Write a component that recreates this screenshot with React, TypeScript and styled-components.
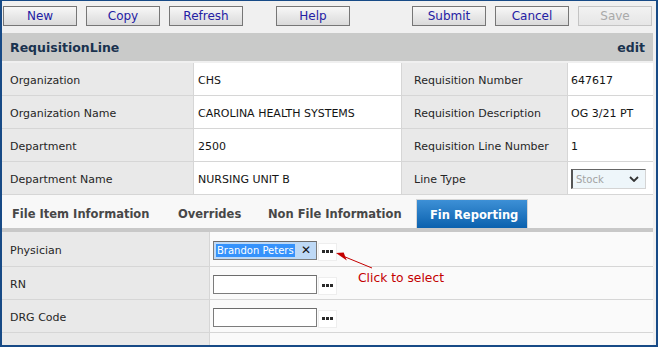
import styled, { createGlobalStyle } from 'styled-components'

const GlobalStyle = createGlobalStyle`
  html, body {
    margin: 0;
    padding: 0;
    background: #f0f0f0;
  }
  body {
    font-family: 'DejaVu Sans', Verdana, sans-serif;
    font-size: 11px;
    color: #222;
  }
`

const Frame = styled.div`
  box-sizing: border-box;
  width: 658px;
  height: 347px;
  border: 2px solid #174a86;
  border-top-width: 1px;
  background: #f0f0f0;
  overflow: hidden;
`

const Toolbar = styled.div`
  display: flex;
  gap: 9px;
  height: 32px;
  box-sizing: border-box;
  padding: 5px 4px 0 1px;
`

const ToolButton = styled.button<{ $push?: number; $disabled?: boolean }>`
  width: 74px;
  height: 20px;
  margin: 0;
  margin-left: ${({ $push }) => ($push ? `${$push}px` : '0')};
  padding: 1px 0 0;
  box-sizing: border-box;
  border: 1px solid ${({ $disabled }) => ($disabled ? '#c4c4c4' : '#767676')};
  background: ${({ $disabled }) =>
    $disabled ? 'linear-gradient(#f2f2f2, #e6e6e6)' : 'linear-gradient(#f7f7f7, #dadada)'};
  color: ${({ $disabled }) => ($disabled ? '#a9a9a9' : '#2420a4')};
  font-family: 'DejaVu Sans', Verdana, sans-serif;
  font-size: 12px;
  line-height: 17px;
  cursor: default;
`

const Spacer = styled.div`
  flex: 1;
`

const Main = styled.div`
  margin-right: 3px;
`

const TitleBar = styled.div`
  display: flex;
  justify-content: space-between;
  align-items: center;
  height: 28px;
  box-sizing: border-box;
  padding: 1px 8px 0;
  background: #c9cac9;
  color: #19324f;
  font-weight: bold;
  font-size: 12.5px;
`

const InfoGrid = styled.div`
  display: grid;
  grid-template-columns: 192px 208px 166px 1fr;
  margin-top: 2px;
`

const Cell = styled.div<{ $label?: boolean; $pad: number; $h?: number; $last?: boolean; $tint?: string }>`
  display: flex;
  align-items: center;
  position: relative;
  height: ${({ $h }) => $h ?? 33}px;
  box-sizing: border-box;
  padding: 2px 0 0 ${({ $pad }) => $pad}px;
  background: ${({ $label, $tint }) => ($label ? '#e9e9e9' : $tint ?? '#ffffff')};
  border-bottom: 1px solid #d6d6d6;
  border-right: ${({ $last }) => ($last ? 'none' : '1px solid #d6d6d6')};
  color: ${({ $label }) => ($label ? '#262626' : '#141414')};
  white-space: nowrap;
`

const SelectBox = styled.div`
  display: flex;
  align-items: center;
  justify-content: space-between;
  width: 75px;
  height: 20px;
  box-sizing: border-box;
  padding: 0 6px 0 3px;
  border-top: 1px solid #666;
  border-left: 2px solid #555;
  border-right: 1px solid #d4d4d4;
  border-bottom: 1px solid #d4d4d4;
  background: #eef6fa;
  color: #a3a3a3;
  font-size: 10px;
`

const TabBar = styled.div`
  display: flex;
  height: 37px;
  box-sizing: border-box;
  padding-top: 4px;
  background: #f8f8f8;
  border-bottom: 4px solid #c8c8c8;
`

const Tab = styled.div<{ $w: number; $pad: number; $active?: boolean }>`
  display: flex;
  align-items: center;
  width: ${({ $w }) => $w}px;
  box-sizing: border-box;
  padding: 1px 0 0 ${({ $pad }) => $pad}px;
  font-weight: bold;
  font-size: 11.5px;
  white-space: nowrap;
  color: ${({ $active }) => ($active ? '#ffffff' : '#474747')};
  background: ${({ $active }) => ($active ? 'linear-gradient(#3d90d6, #0b61ae)' : 'transparent')};
  border: ${({ $active }) => ($active ? '1px solid #d6d6d6' : 'none')};
  border-bottom: none;
`

const FormGrid = styled.div`
  display: grid;
  grid-template-columns: 208px 1fr;
`

const LookupBox = styled.div<{ $filled?: boolean }>`
  display: flex;
  align-items: center;
  justify-content: space-between;
  width: 104px;
  height: 19px;
  box-sizing: border-box;
  padding: 0 5px 0 2px;
  border: 1px solid #7c7c7c;
  border-top-color: #6c6c6c;
  background: ${({ $filled }) => ($filled ? '#bed9f6' : '#ffffff')};
  font-size: 10px;
`

const Selected = styled.span`
  background: #3592fb;
  color: #ffffff;
  line-height: 13px;
  padding: 0 1px;
`

const Clear = styled.span`
  color: #111;
  font-size: 12px;
  line-height: 1;
`

const DotsButton = styled.div`
  display: flex;
  align-items: center;
  justify-content: center;
  gap: 1px;
  width: 19px;
  height: 18px;
  box-sizing: border-box;
  margin: 3px 0 0 1px;
  border: 1px solid #eeeeee;
  background: #ffffff;
`

const Dot = styled.span`
  width: 3px;
  height: 3px;
  background: #2a2a2a;
`

const Note = styled.div`
  position: absolute;
  left: 148px;
  top: 39px;
  z-index: 2;
  color: #c40000;
  font-size: 12.3px;
  line-height: 15px;
  white-space: nowrap;
`

const ArrowSvg = styled.svg`
  position: absolute;
  left: 120px;
  top: 14px;
  z-index: 2;
  overflow: visible;
`

const info = [
  ['Organization', 'CHS', 'Requisition Number', '647617'],
  ['Organization Name', 'CAROLINA HEALTH SYSTEMS', 'Requisition Description', 'OG 3/21 PT'],
  ['Department', '2500', 'Requisition Line Number', '1'],
  ['Department Name', 'NURSING UNIT B', 'Line Type', null],
]

const tabs = [
  { name: 'File Item Information', w: 163, pad: 10 },
  { name: 'Overrides', w: 90, pad: 13 },
  { name: 'Non File Information', w: 161, pad: 13 },
  { name: 'Fin Reporting', w: 112, pad: 13, active: true },
]

function Dots() {
  return (
    <DotsButton>
      <Dot />
      <Dot />
      <Dot />
    </DotsButton>
  )
}

export default function App() {
  return (
    <>
      <GlobalStyle />
      <Frame>
        <Toolbar>
          <ToolButton>New</ToolButton>
          <ToolButton>Copy</ToolButton>
          <ToolButton>Refresh</ToolButton>
          <ToolButton $push={24}>Help</ToolButton>
          <Spacer />
          <ToolButton>Submit</ToolButton>
          <ToolButton>Cancel</ToolButton>
          <ToolButton $disabled>Save</ToolButton>
        </Toolbar>
        <Main>
          <TitleBar>
            <span>RequisitionLine</span>
            <span>edit</span>
          </TitleBar>
          <InfoGrid>
            {info.map(([l1, v1, l2, v2]) => (
              <>
                <Cell key={l1 + 'a'} $label $pad={8}>{l1}</Cell>
                <Cell key={l1 + 'b'} $pad={4}>{v1}</Cell>
                <Cell key={l1 + 'c'} $label $pad={12}>{l2}</Cell>
                <Cell key={l1 + 'd'} $pad={3} $last>
                  {v2 ?? (
                    <SelectBox>
                      <span>Stock</span>
                      <svg width="10" height="6" viewBox="0 0 10 6">
                        <path d="M1 1 L5 5 L9 1" fill="none" stroke="#333" strokeWidth="1.8" />
                      </svg>
                    </SelectBox>
                  )}
                </Cell>
              </>
            ))}
          </InfoGrid>
          <TabBar>
            {tabs.map((t) => (
              <Tab key={t.name} $w={t.w} $pad={t.pad} $active={t.active}>
                {t.name}
              </Tab>
            ))}
          </TabBar>
          <FormGrid>
            <Cell $label $pad={8} $h={35}>Physician</Cell>
            <Cell $pad={3} $h={35} $last $tint="#fafafa">
              <LookupBox $filled>
                <Selected>Brandon Peters</Selected>
                <Clear>✕</Clear>
              </LookupBox>
              <Dots />
              <ArrowSvg width="50" height="28" viewBox="0 0 50 28">
                <line x1="14" y1="10.5" x2="42" y2="22" stroke="#c40000" strokeWidth="1" />
                <polygon points="6,7 13.7,6.6 16.8,14.5" fill="#c40000" />
              </ArrowSvg>
              <Note>Click to select</Note>
            </Cell>
            <Cell $label $pad={8}>RN</Cell>
            <Cell $pad={3} $last $tint="#fafafa">
              <LookupBox />
              <Dots />
            </Cell>
            <Cell $label $pad={8}>DRG Code</Cell>
            <Cell $pad={3} $last $tint="#fafafa">
              <LookupBox />
              <Dots />
            </Cell>
            <Cell $label $pad={8} />
            <Cell $pad={3} $last $tint="#fafafa" />
          </FormGrid>
        </Main>
      </Frame>
    </>
  )
}
